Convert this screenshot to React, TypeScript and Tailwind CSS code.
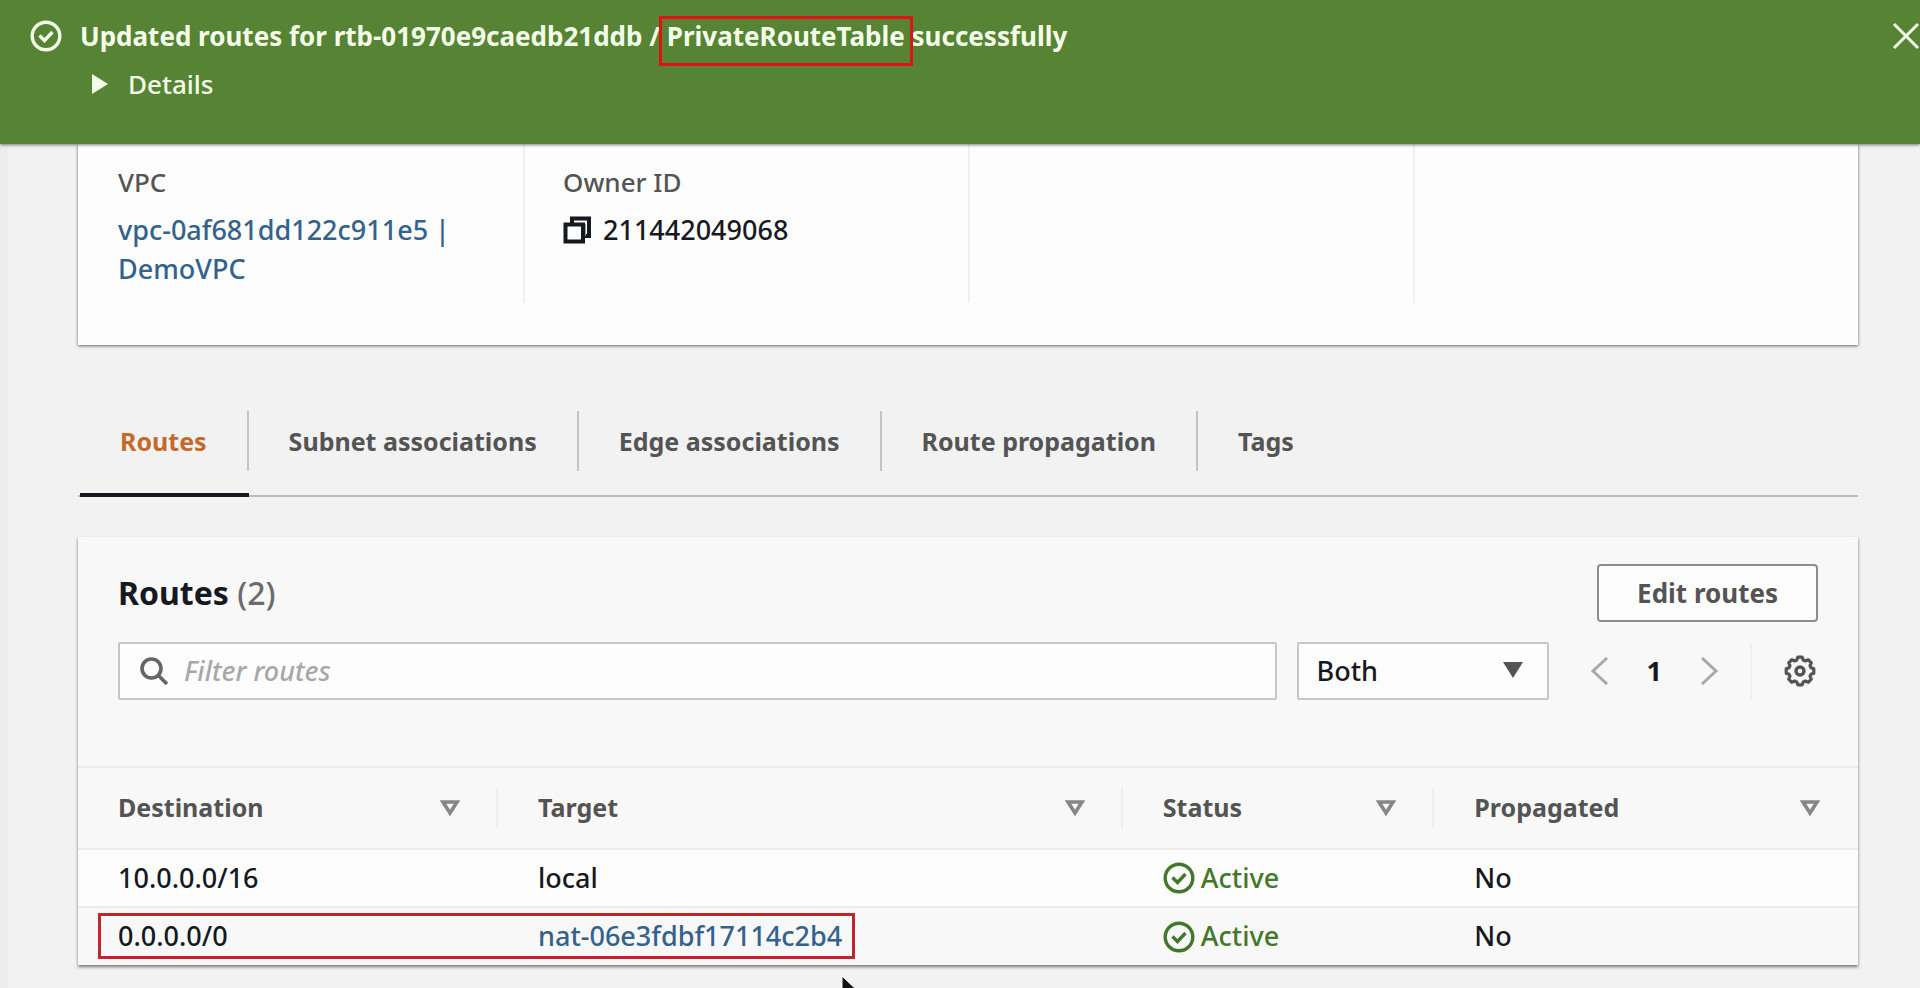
import { ReactElement, ReactNode } from 'react';

const TABS = ['Routes', 'Subnet associations', 'Edge associations', 'Route propagation', 'Tags'];

const COLUMNS = [
  { title: 'Destination', width: 'w-[23.6%]' },
  { title: 'Target', width: 'w-[35.1%]' },
  { title: 'Status', width: 'w-[17.5%]' },
  { title: 'Propagated', width: 'w-[23.8%]' },
];

const ROUTES = [
  { destination: '10.0.0.0/16', target: 'local', link: false, status: 'Active', propagated: 'No' },
  {
    destination: '0.0.0.0/0',
    target: 'nat-06e3fdbf17114c2b4',
    link: true,
    status: 'Active',
    propagated: 'No',
  },
];

const CheckIcon = (): ReactElement => (
  <svg className="size-8 shrink-0" viewBox="0 0 32 32" fill="none" stroke="currentColor" strokeWidth="3.4">
    <circle cx="16" cy="16" r="13.8" />
    <path d="M9.500 15.500l5 5 8-8.500" />
  </svg>
);

const CopyIcon = (): ReactElement => (
  <svg className="size-7 shrink-0" viewBox="0 0 28 28" fill="none" stroke="currentColor">
    <path d="M9 8V2.500h17V20h-5" strokeWidth="4" />
    <path d="M20 8h3v12h-3z" fill="#9b9b9b" stroke="none" />
    <path d="M2.500 8.500h17.500v17H2.500z" fill="#fdfdfd" strokeWidth="4" />
  </svg>
);

const SearchIcon = (): ReactElement => (
  <svg className="size-7 shrink-0" viewBox="0 0 28 28" fill="none" stroke="currentColor" strokeWidth="3.6">
    <circle cx="11.500" cy="11.500" r="9.500" />
    <path d="M18.500 18.500l8.500 8.500" />
  </svg>
);

const SortIcon = (): ReactElement => (
  <svg className="h-4 w-5 shrink-0" viewBox="0 0 20 16" fill="none" stroke="currentColor" strokeWidth="3.6">
    <path d="M3 2h14l-7 11z" />
  </svg>
);

const GearIcon = (): ReactElement => (
  <svg
    className="size-8"
    viewBox="-16 -16 32 32"
    fill="none"
    stroke="currentColor"
    strokeWidth="3.2"
    strokeLinejoin="round"
  >
    <path
      d="M-2.2 -13.8L2.2 -13.8L3.3 -10.9L5.3 -10L8.2 -11.3L11.3 -8.2L10 -5.3L10.9 -3.3L13.8 -2.2L13.8 2.2
      L10.9 3.3L10 5.3L11.3 8.2L8.2 11.3L5.3 10L3.3 10.9L2.2 13.8L-2.2 13.8L-3.3 10.9L-5.3 10L-8.2 11.3
      L-11.3 8.2L-10 5.3L-10.9 3.3L-13.8 2.2L-13.8 -2.2L-10.9 -3.3L-10 -5.3L-11.3 -8.2L-8.2 -11.3
      L-5.3 -10L-3.3 -10.9Z"
    />
    <circle r="4" strokeWidth="3.4" />
  </svg>
);

const Chevron = ({ path }: { path: string }): ReactElement => (
  <svg className="h-7 w-5" viewBox="0 0 20 28" fill="none" stroke="currentColor" strokeWidth="3">
    <path d={path} />
  </svg>
);

const Flash = (): ReactElement => (
  <header className="relative z-10 flex h-36 items-start bg-[#568334] pt-4 pl-[30px] text-[26px] leading-10 text-[#f4ffe9] shadow-[0_1px_3px_rgba(0,0,0,0.5)]">
    <div className="flex h-10 items-center">
      <CheckIcon />
    </div>
    <div className="ml-[18px] grow">
      <p className="font-bold">
        Updated routes for rtb-01970e9caedb21ddb /{' '}
        <span className="relative">
          PrivateRouteTable
          <span className="absolute -inset-x-2 -top-0.5 -bottom-3 border-3 border-[#dc1414]" />
        </span>{' '}
        successfully
      </p>
      <button type="button" className="mt-2 ml-3 flex items-center gap-5 font-medium">
        <svg className="h-5 w-4" viewBox="0 0 16 20" fill="currentColor">
          <path d="M0 0l16 10L0 20z" />
        </svg>
        Details
      </button>
    </div>
    <button type="button" aria-label="Dismiss" className="flex h-10 items-center">
      <svg className="size-7" viewBox="0 0 28 28" stroke="currentColor" strokeWidth="3">
        <path d="M2 2l24 24M26 2L2 26" />
      </svg>
    </button>
  </header>
);

const Detail = ({ label, children }: { label?: string; children?: ReactNode }): ReactElement => (
  <div className="h-[159px] border-l-2 border-[#f0f0f0] pt-[18px] pl-[38px] first:border-transparent">
    {label && <h3 className="text-[26px] leading-10 text-[#545454]">{label}</h3>}
    <div className="mt-2 leading-[39px]">{children}</div>
  </div>
);

const Summary = (): ReactElement => (
  <section className="grid grid-cols-4 bg-[#fdfdfd] pb-[42px] shadow-[0_1px_3px_rgba(0,0,0,0.6)]">
    <Detail label="VPC">
      <a href="#vpc" className="text-[#33628c]">
        vpc-0af681dd122c911e5 |<br />
        DemoVPC
      </a>
    </Detail>
    <Detail label="Owner ID">
      <div className="flex items-center gap-3">
        <button type="button" aria-label="Copy owner ID">
          <CopyIcon />
        </button>
        211442049068
      </div>
    </Detail>
    <Detail />
    <Detail />
  </section>
);

const Tabs = (): ReactElement => (
  <nav
    role="tablist"
    className="mt-[50px] flex border-b-2 border-[#bcbcbc] pl-0.5 text-[25px] font-bold text-[#545454]"
  >
    {TABS.map((tab, index) => (
      <button
        key={tab}
        type="button"
        role="tab"
        aria-selected={index === 0}
        className="group -mb-0.5 border-b-4 border-transparent pt-4 pb-[22px] aria-selected:border-[#16191f] aria-selected:text-[#c56a2c]"
      >
        <span className="block border-r-2 border-[#c4c4c4] px-10 leading-[60px] group-last:border-transparent">
          {tab}
        </span>
      </button>
    ))}
  </nav>
);

const Toolbar = (): ReactElement => (
  <div className="px-10 pt-[27px] pb-[66px]">
    <div className="flex items-center justify-between">
      <h2 className="text-[32px] font-bold">
        Routes <span className="font-medium text-[#6b6b6b]">(2)</span>
      </h2>
      <button
        type="button"
        className="h-[58px] rounded-sm border-2 border-[#8d8d8d] bg-[#fdfdfd] px-[38px] text-[26px] font-bold text-[#545454]"
      >
        Edit routes
      </button>
    </div>
    <div className="mt-5 flex items-center">
      <label className="flex h-[58px] grow items-center gap-4 rounded-xs border-2 border-[#c6c6c6] bg-[#fdfdfd] pl-5 text-[#666]">
        <SearchIcon />
        <input
          type="text"
          aria-label="Filter routes"
          placeholder="Filter routes"
          className="grow text-[#16191f] outline-none placeholder:text-[#a8a8a8] placeholder:italic"
        />
      </label>
      <div className="relative ml-5">
        <select
          aria-label="Propagation filter"
          className="h-[58px] w-[252px] appearance-none rounded-xs border-2 border-[#c6c6c6] bg-[#fdfdfd] pl-[18px] font-medium"
        >
          <option>Both</option>
        </select>
        <svg
          className="pointer-events-none absolute top-5 right-[26px] h-4 w-5 text-[#545454]"
          viewBox="0 0 20 16"
          fill="currentColor"
        >
          <path d="M0 0h20L10 16z" />
        </svg>
      </div>
      <div className="ml-10 flex items-center gap-[38px] text-[#a9a9a9]">
        <button type="button" aria-label="Previous page">
          <Chevron path="M18 1L4 14l14 13" />
        </button>
        <button type="button" className="font-bold text-[#16191f]">
          1
        </button>
        <button type="button" aria-label="Next page">
          <Chevron path="M2 1l14 13L2 27" />
        </button>
      </div>
      <button
        type="button"
        aria-label="Preferences"
        className="ml-[30px] flex h-14 items-center border-l-2 border-[#f0f0f0] pr-0.5 pl-8 text-[#545454]"
      >
        <GearIcon />
      </button>
    </div>
  </div>
);

const RoutesTable = (): ReactElement => (
  <div className="relative">
    <table className="w-full table-fixed text-left">
      <thead>
        <tr className="h-[82px] border-y-2 border-[#ececec]">
          {COLUMNS.map(({ title, width }) => (
            <th key={title} className={`${width} group p-0`}>
              <div className="flex h-10 items-center justify-between border-r-2 border-[#efefef] pr-9 pl-10 text-[25px] text-[#545454] group-last:border-transparent">
                {title}
                <button type="button" aria-label={`Sort by ${title}`} className="text-[#878787]">
                  <SortIcon />
                </button>
              </div>
            </th>
          ))}
        </tr>
      </thead>
      <tbody>
        {ROUTES.map(({ destination, target, link, status, propagated }) => (
          <tr key={destination} className="h-[58px] border-b-2 border-[#ececec] odd:bg-[#fdfdfd] last:border-b-0">
            <td className="pl-10">{destination}</td>
            <td className="pl-10">
              {link ? (
                <a href="#nat" className="text-[#33628c]">
                  {target}
                </a>
              ) : (
                target
              )}
            </td>
            <td className="pl-10">
              <span className="flex items-center gap-1.5 text-[#43782c]">
                <CheckIcon />
                {status}
              </span>
            </td>
            <td className="pl-10">{propagated}</td>
          </tr>
        ))}
      </tbody>
    </table>
    <div className="pointer-events-none absolute bottom-1.5 left-5 h-[46px] w-[42.5%] border-3 border-[#c8232a]" />
  </div>
);

const Pointer = (): ReactElement => (
  <svg className="pointer-events-none absolute top-[975px] left-[841px] h-9 w-6" viewBox="0 0 24 36">
    <path d="M1 1v27l6-6 4 10 5-2-4-10h9z" fill="#111" stroke="#fff" strokeWidth="1" />
  </svg>
);

const App = (): ReactElement => {
  return (
    <div className="relative flex min-h-screen flex-col overflow-hidden bg-[#f2f2f2] font-['Noto_Sans','Open_Sans',sans-serif] text-[27px] font-medium text-[#16191f]">
      <Flash />
      <main className="grow border-l-8 border-[#ededed] pr-[62px] pl-[70px]">
        <Summary />
        <Tabs />
        <section className="mt-10 bg-[#f8f8f8] shadow-[0_2px_3px_rgba(0,0,0,0.5)]">
          <Toolbar />
          <RoutesTable />
        </section>
      </main>
      <Pointer />
    </div>
  );
};

export default App;
